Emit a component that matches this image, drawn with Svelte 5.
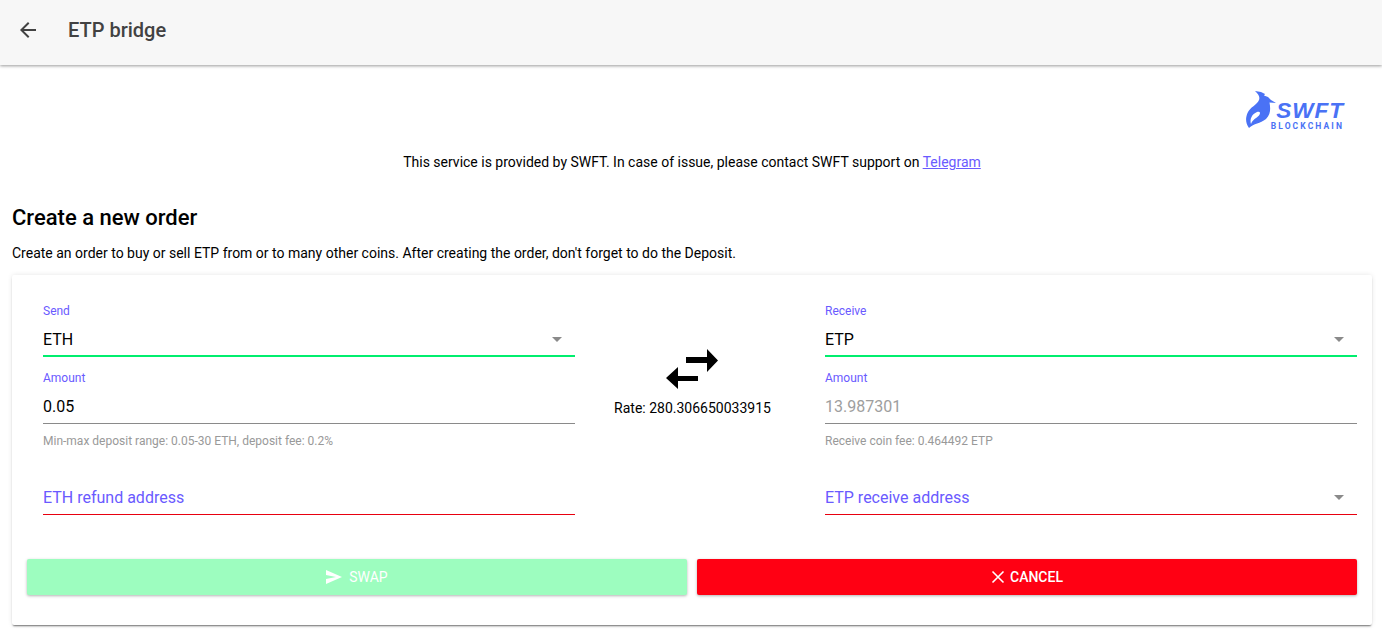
<script>
	const rate = '280.306650033915';
</script>

<header class="topbar">
	<button class="back" aria-label="Back">
		<svg width="24" height="24" viewBox="0 0 24 24"><path d="M20 11H7.83l5.59-5.59L12 4l-8 8 8 8 1.41-1.41L7.83 13H20v-2z" fill="currentColor" /></svg>
	</button>
	<h1>ETP bridge</h1>
</header>

<main class="page">
	<div class="logo-row">
		<div class="logo">
			<svg class="bird" width="30" height="38" viewBox="0 0 30 38">
				<path d="M9 0 L15 1 L19 3 L18 4.5 L22 6 L25 9 L30 12 L23.5 11.5 C24.5 17 25 23 20 28 C14 33 8 32 3 37 C0 33 -1 28 1.5 22 C4 16 11 14 13 9 C14 6 13 4 9 0 Z" fill="#4a72f5" />
				<path d="M5 33 C3.5 28 6 23 11 21 C14 20 15 22 13 24.5 C10 27.5 7 28 5 33 Z" fill="#fff" />
			</svg>
			<div class="logo-text">
				<span class="swft">SWFT</span>
				<span class="chain">BLOCKCHAIN</span>
			</div>
		</div>
	</div>

	<p class="notice">This service is provided by SWFT. In case of issue, please contact SWFT support on <a href="#telegram">Telegram</a></p>

	<h2>Create a new order</h2>
	<p class="intro">Create an order to buy or sell ETP from or to many other coins. After creating the order, don't forget to do the Deposit.</p>

	<section class="card">
		<div class="form">
			<div class="col">
				<div class="field ok">
					<span class="label">Send</span>
					<div class="control"><span>ETH</span><i class="caret"></i></div>
				</div>
				<div class="field">
					<span class="label">Amount</span>
					<div class="control"><span>0.05</span></div>
					<span class="help">Min-max deposit range: 0.05-30 ETH, deposit fee: 0.2%</span>
				</div>
				<div class="field missing">
					<div class="control placeholder"><span>ETH refund address</span></div>
				</div>
			</div>

			<div class="middle">
				<svg class="swap-icon" width="52" height="40" viewBox="0 0 52 40">
					<path d="M20 8H41V0L52 11.5 41 23V14H20Z M32 27H12V18L0 29 12 40V32H32Z" fill="#000" />
				</svg>
				<div class="rate">Rate: {rate}</div>
			</div>

			<div class="col">
				<div class="field ok">
					<span class="label">Receive</span>
					<div class="control"><span>ETP</span><i class="caret"></i></div>
				</div>
				<div class="field">
					<span class="label">Amount</span>
					<div class="control disabled"><span>13.987301</span></div>
					<span class="help">Receive coin fee: 0.464492 ETP</span>
				</div>
				<div class="field missing">
					<div class="control placeholder"><span>ETP receive address</span><i class="caret"></i></div>
				</div>
			</div>
		</div>

		<div class="actions">
			<button class="btn swap" disabled>
				<svg width="16" height="14" viewBox="0 0 16 14"><path d="M0 0 16 7 0 14V9L10 7 0 5Z" fill="#fff" /></svg>
				SWAP
			</button>
			<button class="btn cancel">
				<svg width="14" height="14" viewBox="0 0 14 14"><path d="M1.5 1.5 12.5 12.5M12.5 1.5 1.5 12.5" stroke="#fff" stroke-width="1.6" fill="none" /></svg>
				CANCEL
			</button>
		</div>
	</section>
</main>

<style>
	:global(body) {
		background: #fff;
		font-family: Roboto, sans-serif;
		color: #000;
	}

	.topbar {
		display: flex;
		align-items: center;
		height: 65px;
		box-sizing: border-box;
		padding-bottom: 6px;
		background: #f7f7f7;
		box-shadow: 0 1px 3px rgba(0, 0, 0, 0.4);
		color: #424242;
	}

	.back {
		display: flex;
		margin-left: 16px;
		padding: 0;
		border: none;
		background: none;
		color: #424242;
	}

	.topbar h1 {
		margin: 0 0 0 28px;
		font-size: 20px;
		font-weight: 500;
	}

	.page {
		padding: 0 10px 15px 12px;
	}

	.logo-row {
		display: flex;
		justify-content: flex-end;
		padding: 26px 28px 0 0;
		height: 51px;
	}

	.logo {
		display: flex;
		align-items: flex-start;
		height: 38px;
	}

	.logo-text {
		display: flex;
		flex-direction: column;
		align-items: flex-end;
		margin-left: -5px;
		padding-top: 9px;
	}

	.swft {
		font-family: 'Liberation Sans', sans-serif;
		font-size: 22.5px;
		font-weight: 700;
		font-style: italic;
		line-height: 21px;
		color: #4a72f5;
		letter-spacing: 1px;
	}

	.chain {
		margin-top: 1px;
		font-size: 8.5px;
		font-weight: 700;
		line-height: 9px;
		letter-spacing: 2.1px;
		color: #4a72f5;
	}

	.notice {
		margin: 10px 0 0;
		font-size: 14px;
		line-height: 20px;
		text-align: center;
	}

	.notice a {
		color: #6a5aff;
	}

	h2 {
		margin: 32px 0 0;
		font-size: 22px;
		font-weight: 500;
		line-height: 28px;
	}

	.intro {
		margin: 11px 0 0;
		font-size: 14px;
		line-height: 20px;
	}

	.card {
		margin-top: 12px;
		height: 350px;
		box-sizing: border-box;
		padding: 26px 15px 0;
		background: #fff;
		border-radius: 2px;
		box-shadow: 0 2px 2px -1px rgba(0, 0, 0, 0.55), 0 0 5px rgba(0, 0, 0, 0.1);
	}

	.form {
		display: grid;
		grid-template-columns: 532px 1fr 532px;
		padding-left: 16px;
	}

	.col {
		display: flex;
		flex-direction: column;
	}

	.field {
		height: 67px;
	}

	.field.missing {
		height: 58px;
		margin-top: 22px;
		padding-top: 22px;
		box-sizing: border-box;
	}

	.label {
		display: block;
		font-size: 12px;
		line-height: 20px;
		color: #6a5aff;
	}

	.control {
		display: flex;
		align-items: center;
		justify-content: space-between;
		height: 36px;
		box-sizing: border-box;
		padding-top: 1px;
		font-size: 16px;
		border-bottom: 1px solid #8a8a8a;
	}

	.ok .control {
		padding-top: 2px;
		border-bottom: 2px solid #00ee6e;
	}

	.missing .control {
		border-bottom: 1px solid #e8000f;
	}

	.disabled {
		color: #9e9e9e;
	}

	.placeholder {
		color: #6a5aff;
	}

	.caret {
		width: 0;
		height: 0;
		margin-right: 13px;
		border-left: 5px solid transparent;
		border-right: 5px solid transparent;
		border-top: 5px solid #8a8a8a;
	}

	.help {
		display: block;
		margin-top: 8px;
		font-size: 12px;
		line-height: 18px;
		color: #999;
	}

	.middle {
		display: flex;
		flex-direction: column;
		align-items: center;
		padding: 48px 15px 0 0;
	}

	.swap-icon {
		margin-left: -2px;
	}

	.rate {
		margin-top: 9px;
		font-size: 14px;
		line-height: 20px;
	}

	.actions {
		display: grid;
		grid-template-columns: 1fr 1fr;
		gap: 10px;
		margin-top: 44px;
	}

	.btn {
		display: flex;
		align-items: center;
		justify-content: center;
		gap: 5px;
		height: 36px;
		border: none;
		border-radius: 2px;
		font-family: Roboto, sans-serif;
		font-size: 14px;
		font-weight: 500;
		color: #fff;
		box-shadow: 0 1px 3px rgba(0, 0, 0, 0.3);
	}

	.swap {
		gap: 7px;
		background: #9dfdbf;
		font-weight: 400;
	}

	.cancel {
		background: #ff0013;
	}
</style>
